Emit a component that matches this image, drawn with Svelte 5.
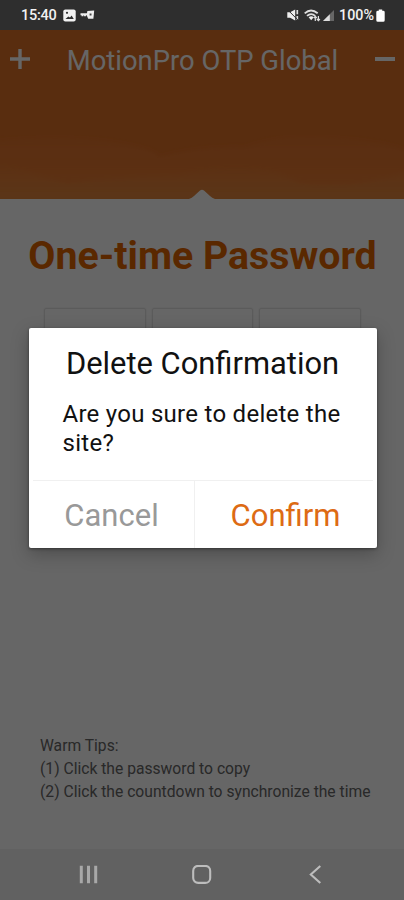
<script lang="ts">
  const title = 'MotionPro OTP Global';
  const digits = ['', '', ''];
  const tips = [
    'Warm Tips:',
    '(1) Click the password to copy',
    '(2) Click the countdown to synchronize the time'
  ];
</script>

<div class="phone">
  <div class="status-bar">
    <div class="status-left">
      <span class="clock">15:40</span>
      <svg class="image-icon" width="13" height="13" viewBox="0 0 13 13">
        <rect x="0.3" y="0.5" width="12.4" height="12" rx="2" fill="#f2f2f2" />
        <path d="M2.5 10l2.8-2.6 1.7 1.2 1.6-2 2.2 3.4z" fill="#2e2e2e" />
        <circle cx="4" cy="3.8" r="1.1" fill="#2e2e2e" />
      </svg>
      <svg class="key-icon" width="15" height="10" viewBox="0 0 15 10">
        <path d="M0.5 4.2h7M2.5 4.2v2M5 4.2v2" fill="none" stroke="#eee" stroke-width="1.9" />
        <path d="M7.4 1l6.8-0.4-0.8 8.2H8.2L6.6 5z" fill="#eee" />
        <path d="M9.6 3.5h1.9v2H9.6z" fill="#444" />
      </svg>
    </div>
    <div class="status-right">
      <svg class="mute-icon" width="12" height="12" viewBox="0 0 12 12">
        <path d="M0.3 3.2h2.8L8.2 0.4v11.2L3.1 8.8H0.3z" fill="#eee" />
        <path d="M10.3 1v4.2M10.3 7v4" stroke="#ddd" stroke-width="1.7" />
        <path d="M0.5 0.6l10.7 10.7" stroke="#2e2e2e" stroke-width="1" />
      </svg>
      <svg class="wifi-icon" width="17" height="13" viewBox="0 0 17 13">
        <path d="M0.7 4.3Q7-1.4 13.7 4.3M3 6.9Q7.2 3.3 11.2 6.9" fill="none" stroke="#ddd" stroke-width="1.8" />
        <path d="M4.6 8.3q2.6-2 5.2 0L7.2 11.2z" fill="#eee" />
        <path d="M11.3 12V7.6M9.8 9l1.5-1.6L12.8 9M14.4 7v4.4M12.9 10l1.5 1.6 1.5-1.6" fill="none" stroke="#ddd" stroke-width="1.2" />
      </svg>
      <svg class="signal-icon" width="11" height="11" viewBox="0 0 11 11">
        <path d="M0 11L11 0v11z" fill="#666" />
        <path d="M0 11L6.8 4.2V11z" fill="#ddd" />
      </svg>
      <span class="battery-text">100%</span>
      <svg class="battery-icon" width="9" height="13" viewBox="0 0 9 13">
        <path d="M2.8 0.5h3.4v1.3h1Q8.7 1.8 8.7 3.2v8q0 1.5-1.5 1.5H1.8Q0.3 12.7 0.3 11.2v-8Q0.3 1.8 1.8 1.8h1z" fill="#fff" />
      </svg>
    </div>
  </div>

  <main class="screen">
    <header class="hero">
      <svg class="waves" viewBox="0 0 404 64" preserveAspectRatio="none" aria-hidden="true">
        <defs>
          <linearGradient id="wave" x1="0" y1="0" x2="0" y2="1">
            <stop offset="0" stop-color="#e87c36" stop-opacity="0.3" />
            <stop offset="0.6" stop-color="#eb8038" stop-opacity="0.6" />
            <stop offset="1" stop-color="#e5853a" stop-opacity="0.8" />
          </linearGradient>
          <linearGradient id="glow" x1="0" y1="0" x2="0" y2="1">
            <stop offset="0" stop-color="#e38a40" stop-opacity="0" />
            <stop offset="1" stop-color="#e08c42" stop-opacity="0.8" />
          </linearGradient>
          <filter id="soft" x="-5%" y="-20%" width="110%" height="140%">
            <feGaussianBlur stdDeviation="2" />
          </filter>
        </defs>
        <g filter="url(#soft)">
          <path d="M-10 6Q60-2 110 6T158 22Q200 10 245 12Q285-4 345 3Q385 6 414 18V74H-10z" fill="url(#wave)" />
          <path d="M-10 26Q30 38 66 48Q120 42 180 40Q255 22 300 48Q355 56 414 34V74H-10z" fill="url(#glow)" />
        </g>
      </svg>
      <div class="title-bar">
        <svg class="add" width="20" height="20" viewBox="0 0 20 20">
          <path d="M10 0v20M0 10h20" stroke="#fff" stroke-width="3.4" />
        </svg>
        <h1>{title}</h1>
        <svg class="remove" width="20" height="20" viewBox="0 0 20 20">
          <path d="M0 10h20" stroke="#fff" stroke-width="4" />
        </svg>
      </div>
      <svg class="notch" width="26" height="10" viewBox="0 0 26 10">
        <path d="M0 10Q3 9 5 7L11 1.5Q13 0 15 1.5L21 7Q23 9 26 10z" fill="#fff" />
      </svg>
    </header>

    <h2>One-time Password</h2>
    <div class="digits">
      {#each digits as digit}
        <div class="digit">{digit}</div>
      {/each}
    </div>

    <div class="tips">
      {#each tips as tip}
        <p>{tip}</p>
      {/each}
    </div>
  </main>

  <nav class="nav-bar">
    <svg width="20" height="20" viewBox="0 0 20 20">
      <path d="M2.3 0.8v17.4M9.5 0.8v17.4M16.7 0.8v17.4" stroke="#a8a8a8" stroke-width="3" />
    </svg>
    <svg width="20" height="20" viewBox="0 0 20 20">
      <rect x="1.2" y="0.9" width="17" height="17" rx="5" fill="none" stroke="#bdbdbd" stroke-width="2.1" />
    </svg>
    <svg width="20" height="20" viewBox="0 0 20 20">
      <path d="M15.3 1L5.8 9.5l9.5 8.5" fill="none" stroke="#bdbdbd" stroke-width="2.1" />
    </svg>
  </nav>

  <div class="overlay">
    <div class="dialog" role="dialog" aria-modal="true">
      <div class="dialog-body">
        <h3>Delete Confirmation</h3>
        <p>Are you sure to delete the site?</p>
      </div>
      <div class="dialog-actions">
        <button class="cancel">Cancel</button>
        <button class="confirm">Confirm</button>
      </div>
    </div>
  </div>
</div>

<style>
  :global(body) {
    margin: 0;
    background: #666;
  }

  .phone {
    position: relative;
    display: flex;
    flex-direction: column;
    width: 404px;
    height: 900px;
    overflow: hidden;
    font-family: Roboto, 'Liberation Sans', sans-serif;
  }

  h1,
  h2,
  h3,
  p {
    margin: 0;
    font-weight: 400;
  }

  svg {
    display: block;
    flex-shrink: 0;
  }

  .status-bar {
    height: 30px;
    box-sizing: border-box;
    padding: 0 19px 0 21px;
    display: flex;
    justify-content: space-between;
    align-items: center;
    background: #2e2e2e;
    color: #f2f2f2;
    font-size: 14.5px;
    font-weight: 500;
    flex-shrink: 0;
  }

  .status-left,
  .status-right {
    display: flex;
    align-items: center;
  }

  .clock {
    letter-spacing: -0.25px;
  }

  .image-icon {
    margin-left: 6px;
  }

  .key-icon {
    margin-left: 4px;
  }

  .wifi-icon {
    margin-left: 5px;
  }

  .signal-icon {
    margin-left: 2px;
  }

  .battery-text {
    margin-left: 5px;
    font-size: 14.3px;
  }

  .battery-icon {
    margin-left: 2px;
  }

  .screen {
    flex: 1;
    display: flex;
    flex-direction: column;
    background: #fff;
  }

  .hero {
    position: relative;
    height: 169px;
    background: #df7026;
    color: #fff;
  }

  .waves {
    position: absolute;
    left: 0;
    bottom: 0;
    width: 100%;
    height: 64px;
  }

  .title-bar {
    position: relative;
    display: flex;
    align-items: center;
    justify-content: space-between;
    height: 60px;
    padding: 0 9px 0 10px;
  }

  .title-bar svg {
    margin-bottom: 2px;
  }

  h1 {
    padding-top: 2px;
    font-size: 27.4px;
    line-height: 58px;
    white-space: nowrap;
  }

  .notch {
    position: absolute;
    left: 189px;
    bottom: 0;
  }

  h2 {
    margin-top: 32px;
    padding-left: 1px;
    color: #e06500;
    font-size: 39.3px;
    font-weight: 700;
    line-height: 50px;
    text-align: center;
    white-space: nowrap;
  }

  .digits {
    display: grid;
    grid-template-columns: repeat(3, 1fr);
    gap: 6px;
    margin: 27px 43px 0 44px;
  }

  .digit {
    height: 110px;
    border: 1px solid #e4e4e4;
    border-radius: 2px;
    box-shadow: 0 0 2px rgba(0, 0, 0, 0.12);
  }

  .tips {
    margin: auto 0 46px 40px;
    color: #666;
    font-size: 15.65px;
    line-height: 23px;
    white-space: nowrap;
  }

  .nav-bar {
    position: relative;
    z-index: 2;
    display: flex;
    justify-content: space-between;
    align-items: center;
    height: 51px;
    padding: 0 79px;
    background: #616161;
  }

  .overlay {
    position: absolute;
    inset: 30px 0 0;
    background: rgba(0, 0, 0, 0.6);
    display: flex;
    justify-content: center;
    align-items: flex-start;
  }

  .dialog {
    width: 348px;
    height: 220px;
    margin: 298px 0 0 1px;
    display: flex;
    flex-direction: column;
    background: #fff;
    border-radius: 2px;
    box-shadow: 0 6px 18px rgba(0, 0, 0, 0.25), 0 1px 3px rgba(0, 0, 0, 0.4);
  }

  .dialog-body {
    flex: 1;
    padding: 16px 34px 0;
    color: #111;
  }

  h3 {
    font-size: 30.9px;
    line-height: 40px;
    text-align: center;
    white-space: nowrap;
  }

  .dialog-body p {
    margin-top: 16px;
    font-size: 24px;
    letter-spacing: 0.27px;
    line-height: 29px;
  }

  .dialog-actions {
    display: grid;
    grid-template-columns: 162px 1fr;
    height: 67px;
    margin: 0 4px;
    border-top: 1px solid #f0f0f0;
  }

  button {
    padding: 2px 0 0;
    border: 0;
    background: none;
    font-family: inherit;
    font-size: 31px;
  }

  .cancel {
    padding-right: 3px;
    border-right: 1px solid #f0f0f0;
    color: #999;
  }

  .confirm {
    padding-left: 4px;
    color: #dd6b14;
  }
</style>
